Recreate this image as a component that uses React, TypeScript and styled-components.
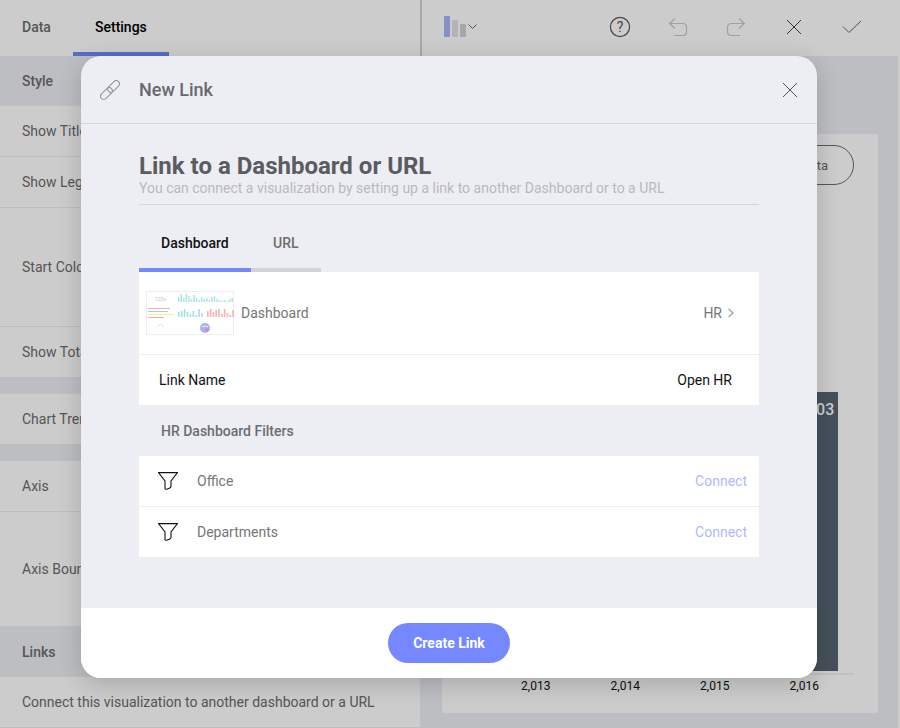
import React from 'react';
import styled, { createGlobalStyle } from 'styled-components';

const GlobalStyle = createGlobalStyle`
  html, body {
    margin: 0;
    padding: 0;
    height: 100%;
    overflow: hidden;
    background: #edeef3;
    font-family: Roboto, "Liberation Sans", sans-serif;
  }
  * { box-sizing: border-box; }
`;

const Page = styled.div`
  position: relative;
  width: 900px;
  height: 728px;
  display: flex;
  overflow: hidden;
`;

const Sidebar = styled.aside`
  width: 420px;
  display: flex;
  flex-direction: column;
  background: #fff;
`;

const TabBar = styled.div`
  height: 56px;
  display: flex;
  background: #fff;
`;

const SideTab = styled.div<{ $active?: boolean; $w: number }>`
  width: ${p => p.$w}px;
  padding-top: 1px;
  padding-left: 22px;
  display: flex;
  align-items: center;
  font-size: 14px;
  font-weight: 500;
  color: ${p => (p.$active ? '#000' : '#6c6c6e')};
  border-bottom: 4px solid ${p => (p.$active ? '#7088fa' : 'transparent')};
`;

const SectionHead = styled.div<{ $h?: number }>`
  height: ${p => p.$h ?? 50}px;
  padding-left: 22px;
  padding-top: ${p => (p.$h ? '1px' : '0')};
  display: flex;
  align-items: center;
  background: #edeef3;
  font-size: 14px;
  font-weight: 500;
  color: #6c6c6e;
`;

const SideRow = styled.div<{ $h?: number; $flat?: boolean }>`
  height: ${p => p.$h ?? 51}px;
  padding-left: 22px;
  display: flex;
  align-items: center;
  background: #fff;
  border-bottom: ${p => (p.$flat ? '0' : '1px solid #edeef3')};
  font-size: 14px;
  color: #6c6c6e;
`;

const SectionGap = styled.div`
  height: 17px;
  background: #edeef3;
`;

const Main = styled.main`
  flex: 1;
  display: flex;
  flex-direction: column;
  background: #edeef3;
  border-right: 2px solid #fff;
`;

const Toolbar = styled.div`
  height: 56px;
  margin-right: -2px;
  display: flex;
  align-items: center;
  padding: 0 19px 2px 22px;
  background: #fff;
  border-left: 2px solid #d2d2d2;
`;

const ChartPicker = styled.div`
  display: flex;
  margin-right: auto;
`;

const ToolButton = styled.div`
  width: 58px;
  display: flex;
  justify-content: center;
`;

const Card = styled.section`
  width: 436px;
  height: 579px;
  margin: 78px 0 0 22px;
  padding: 11px 24px 0 49px;
  display: flex;
  flex-direction: column;
  background: #fff;
`;

const CardActions = styled.div`
  display: flex;
  justify-content: flex-end;
`;

const OutlineButton = styled.div`
  height: 40px;
  padding: 0 25px;
  display: flex;
  align-items: center;
  border: 1px solid #6c6c6e;
  border-radius: 20px;
  font-size: 13px;
  color: #6c6c6e;
`;

const Plot = styled.div`
  flex: 1;
  display: grid;
  grid-template-columns: repeat(4, 89.5px);
  align-items: end;
  border-bottom: 2px solid #f2f2f2;
`;

const BarSlot = styled.div`
  display: flex;
  justify-content: center;
  padding-bottom: 2px;
`;

const Bar = styled.div`
  width: 68px;
  padding: 8px 4px 0 0;
  text-align: right;
  background: #586472;
  font-size: 16px;
  font-weight: 500;
  color: #fff;
`;

const AxisLabels = styled.div`
  height: 38px;
  flex: none;
  display: grid;
  grid-template-columns: repeat(4, 89.5px);
  padding-top: 4px;
`;

const AxisLabel = styled.div`
  text-align: center;
  font-size: 12px;
  color: #111;
`;

const Overlay = styled.div`
  position: absolute;
  inset: 0;
  background: rgba(0, 0, 0, 0.2);
`;

const Modal = styled.div`
  position: absolute;
  left: 81px;
  top: 56px;
  width: 736px;
  height: 622px;
  display: flex;
  flex-direction: column;
  background: #edeef3;
  border-radius: 20px;
  overflow: hidden;
  box-shadow: 0 6px 24px rgba(0, 0, 0, 0.18);
`;

const ModalHeader = styled.header`
  height: 68px;
  flex: none;
  display: flex;
  align-items: center;
  padding: 0 19px;
  border-bottom: 1px solid #d6d7dc;
`;

const ModalTitle = styled.h2`
  flex: 1;
  margin: 0 0 0 19px;
  font-size: 18px;
  font-weight: 500;
  color: #68696d;
`;

const ModalBody = styled.div`
  flex: 1;
  padding: 28px 58px 0;
`;

const Heading = styled.h1`
  margin: 0;
  font-size: 24px;
  line-height: 29px;
  font-weight: 700;
  color: #5b5c60;
`;

const Subheading = styled.p`
  margin: 0;
  height: 24px;
  font-size: 14px;
  line-height: 15px;
  color: #b8b9bd;
  border-bottom: 1px solid #d6d7dc;
`;

const Tabs = styled.div`
  display: flex;
  margin-top: 16px;
  height: 51px;
`;

const Tab = styled.div<{ $active?: boolean; $w: number }>`
  width: ${p => p.$w}px;
  padding-left: 22px;
  display: flex;
  align-items: center;
  padding-bottom: 4px;
  font-size: 14px;
  font-weight: 500;
  color: ${p => (p.$active ? '#111' : '#6c6c6e')};
  border-bottom: 4px solid ${p => (p.$active ? '#7688ff' : '#d2d3d8')};
`;

const Panel = styled.div`
  background: #fff;
`;

const Row = styled.div<{ $h?: number; $pad?: string }>`
  height: ${p => p.$h ?? 51}px;
  padding: ${p => p.$pad ?? '0 12px 0 19px'};
  display: flex;
  align-items: center;
  font-size: 14px;
  border-bottom: 1px solid #edeef3;
  &:last-child {
    height: ${p => (p.$h ?? 51) - 1}px;
    border-bottom: 0;
  }
`;

const Muted = styled.span`
  color: #75767a;
`;

const Dark = styled.span`
  color: #111;
`;

const Value = styled.span`
  margin-left: auto;
  display: flex;
  align-items: center;
  gap: 5px;
`;

const DashName = styled(Muted)`
  margin-left: 7px;
`;

const FilterName = styled(Muted)`
  margin-left: 19px;
`;

const Connect = styled.span`
  margin-left: auto;
  color: #aeb9ff;
`;

const FiltersTitle = styled.div`
  height: 51px;
  padding-left: 22px;
  display: flex;
  align-items: center;
  font-size: 14px;
  font-weight: 500;
  color: #6c6d71;
`;

const ModalFooter = styled.footer`
  height: 70px;
  flex: none;
  display: flex;
  align-items: center;
  justify-content: center;
  background: #fff;
`;

const PrimaryButton = styled.div`
  width: 122px;
  height: 40px;
  display: flex;
  align-items: center;
  justify-content: center;
  border-radius: 20px;
  background: #7688ff;
  color: #fff;
  font-size: 14px;
  font-weight: 700;
`;

const ChartIcon = () => (
  <svg width="34" height="22" viewBox="0 0 34 22">
    <rect x="0" y="0" width="6" height="21" rx="1" fill="#a6b4ff" />
    <rect x="8" y="4" width="6" height="17" rx="1" fill="#e2e2e2" />
    <rect x="16" y="8" width="6" height="13" rx="1" fill="#d0d0d0" />
    <path d="M24.5 8.5 L28.5 12.5 L32.5 8.5" fill="none" stroke="#666" strokeWidth="1" />
  </svg>
);

const HelpIcon = () => (
  <svg width="22" height="22" viewBox="0 0 22 22">
    <circle cx="11" cy="11" r="9.6" fill="none" stroke="#555" strokeWidth="1.2" />
    <text x="11" y="16" textAnchor="middle" fontFamily="Roboto, sans-serif" fontSize="14" fill="#555">?</text>
  </svg>
);

const UndoIcon = ({ flip }: { flip?: boolean }) => (
  <svg width="20" height="20" viewBox="0 0 20 20" style={flip ? { transform: 'scaleX(-1)' } : undefined}>
    <path d="M7 1.5 L1.5 6.5 L7 11.5 M1.5 6.5 H14.5 Q18.5 6.5 18.5 10.5 V14.5 Q18.5 18.5 14.5 18.5 H6" fill="none" stroke="#c8c8c8" strokeWidth="1.2" />
  </svg>
);

const CloseIcon = ({ size = 16, color = '#444' }: { size?: number; color?: string }) => (
  <svg width={size} height={size} viewBox="0 0 16 16">
    <path d="M1 1 L15 15 M15 1 L1 15" fill="none" stroke={color} strokeWidth="1" />
  </svg>
);

const CheckIcon = () => (
  <svg width="20" height="14" viewBox="0 0 20 14">
    <path d="M1 6.5 L7 12.5 L19 1" fill="none" stroke="#666" strokeWidth="1" />
  </svg>
);

const LinkIcon = () => (
  <svg width="20" height="20" viewBox="0 0 20 20">
    <g fill="none" stroke="#97989c" strokeWidth="1.1" transform="rotate(-45 10 10)">
      <rect x="-2" y="6.8" width="14" height="6.4" rx="3.2" />
      <rect x="8" y="6.8" width="14" height="6.4" rx="3.2" />
    </g>
  </svg>
);

const FilterIcon = () => (
  <svg width="20" height="18" viewBox="0 0 20 18">
    <path d="M0.5 0.6 H19.5 L13 9 V14 Q13 15.6 11.4 16.2 L8.6 17.2 Q7 17.7 7 16 V9 Z" fill="none" stroke="#111" strokeWidth="1.1" />
  </svg>
);

const Chevron = () => (
  <svg width="8" height="10" viewBox="0 0 8 10">
    <path d="M1.5 1 L6 5 L1.5 9" fill="none" stroke="#a4a5a9" strokeWidth="1.4" />
  </svg>
);

const topBars = [5, 8, 4, 8, 6, 3, 7, 4, 2, 5, 3, 4, 2, 5, 6, 3, 2, 1, 2, 1, 3, 4];
const blueBars = [5, 6, 8, 5, 3, 6, 2, 8, 4];
const redBars = [6, 8, 5, 7, 8, 3, 8, 4, 2, 7];

const DashboardThumb = () => (
  <svg width="88" height="44" viewBox="0 0 88 44">
    <rect x="0.5" y="0.5" width="87" height="43" fill="#fff" stroke="#eeeef2" />
    <text x="9" y="9.5" fontFamily="Roboto, sans-serif" fontSize="5" fill="#c4c4c4">123+</text>
    {topBars.map((h, i) => (
      <rect key={i} x={32 + i * 2.55} y={11 - h} width="1.5" height={h} fill="#a9e6e2" />
    ))}
    <rect x="2" y="17" width="22" height="1" fill="#f9a9a9" />
    <rect x="2" y="20" width="20" height="1" fill="#8fdcd6" />
    <rect x="2" y="23" width="26" height="1" fill="#f7ee8a" />
    <rect x="2" y="26" width="16" height="1" fill="#f9a9a9" />
    {blueBars.map((h, i) => (
      <rect key={i} x={32 + i * 2.9} y={26 - h} width="1.7" height={h} fill="#a5e3ec" />
    ))}
    {redBars.map((h, i) => (
      <rect key={i} x={61 + i * 2.8} y={26 - h} width="1.7" height={h} fill="#fbb4b4" />
    ))}
    <path d="M11 36 Q14.5 31 18 36" fill="none" stroke="#a9e6e2" strokeWidth="0.8" />
    <circle cx="59" cy="37" r="5" fill="#a3b1f7" />
    <circle cx="61" cy="39" r="1.6" fill="#f07f8c" />
    <path d="M56 36 Q59 34 62 36" fill="none" stroke="#fff" strokeWidth="0.8" />
  </svg>
);

const years = ['2,013', '2,014', '2,015', '2,016'];

export default function App() {
  return (
    <>
      <GlobalStyle />
      <Page>
        <Sidebar>
          <TabBar>
            <SideTab $w={73}>Data</SideTab>
            <SideTab $w={96} $active>Settings</SideTab>
          </TabBar>
          <SectionHead>Style</SectionHead>
          <SideRow>Show Title</SideRow>
          <SideRow>Show Legend</SideRow>
          <SideRow $h={119}>Start Color</SideRow>
          <SideRow $h={50} $flat>Show Totals</SideRow>
          <SectionGap />
          <SideRow $h={50} $flat>Chart Trendline</SideRow>
          <SectionGap />
          <SideRow>Axis</SideRow>
          <SideRow $h={114} $flat>Axis Bounds</SideRow>
          <SectionHead $h={51}>Links</SectionHead>
          <SideRow>Connect this visualization to another dashboard or a URL</SideRow>
        </Sidebar>
        <Main>
          <Toolbar>
            <ChartPicker>
              <ChartIcon />
            </ChartPicker>
            <ToolButton><HelpIcon /></ToolButton>
            <ToolButton><UndoIcon /></ToolButton>
            <ToolButton><UndoIcon flip /></ToolButton>
            <ToolButton><CloseIcon /></ToolButton>
            <ToolButton><CheckIcon /></ToolButton>
          </Toolbar>
          <Card>
            <CardActions>
              <OutlineButton>Add Data</OutlineButton>
            </CardActions>
            <Plot>
              {years.map(y => (
                <BarSlot key={y}>
                  <Bar style={{ height: 279 }}>1,203</Bar>
                </BarSlot>
              ))}
            </Plot>
            <AxisLabels>
              {years.map(y => (
                <AxisLabel key={y}>{y}</AxisLabel>
              ))}
            </AxisLabels>
          </Card>
        </Main>
        <Overlay />
        <Modal>
          <ModalHeader>
            <LinkIcon />
            <ModalTitle>New Link</ModalTitle>
            <CloseIcon color="#555" />
          </ModalHeader>
          <ModalBody>
            <Heading>Link to a Dashboard or URL</Heading>
            <Subheading>You can connect a visualization by setting up a link to another Dashboard or to a URL</Subheading>
            <Tabs>
              <Tab $active $w={112}>Dashboard</Tab>
              <Tab $w={70}>URL</Tab>
            </Tabs>
            <Panel>
              <Row $h={83} $pad="0 24px 0 7px">
                <DashboardThumb />
                <DashName>Dashboard</DashName>
                <Value>
                  <Muted>HR</Muted>
                  <Chevron />
                </Value>
              </Row>
              <Row $pad="0 27px 0 20px">
                <Dark>Link Name</Dark>
                <Value><Dark>Open HR</Dark></Value>
              </Row>
            </Panel>
            <FiltersTitle>HR Dashboard Filters</FiltersTitle>
            <Panel>
              {['Office', 'Departments'].map(name => (
                <Row key={name}>
                  <FilterIcon />
                  <FilterName>{name}</FilterName>
                  <Connect>Connect</Connect>
                </Row>
              ))}
            </Panel>
          </ModalBody>
          <ModalFooter>
            <PrimaryButton>Create Link</PrimaryButton>
          </ModalFooter>
        </Modal>
      </Page>
    </>
  );
}
